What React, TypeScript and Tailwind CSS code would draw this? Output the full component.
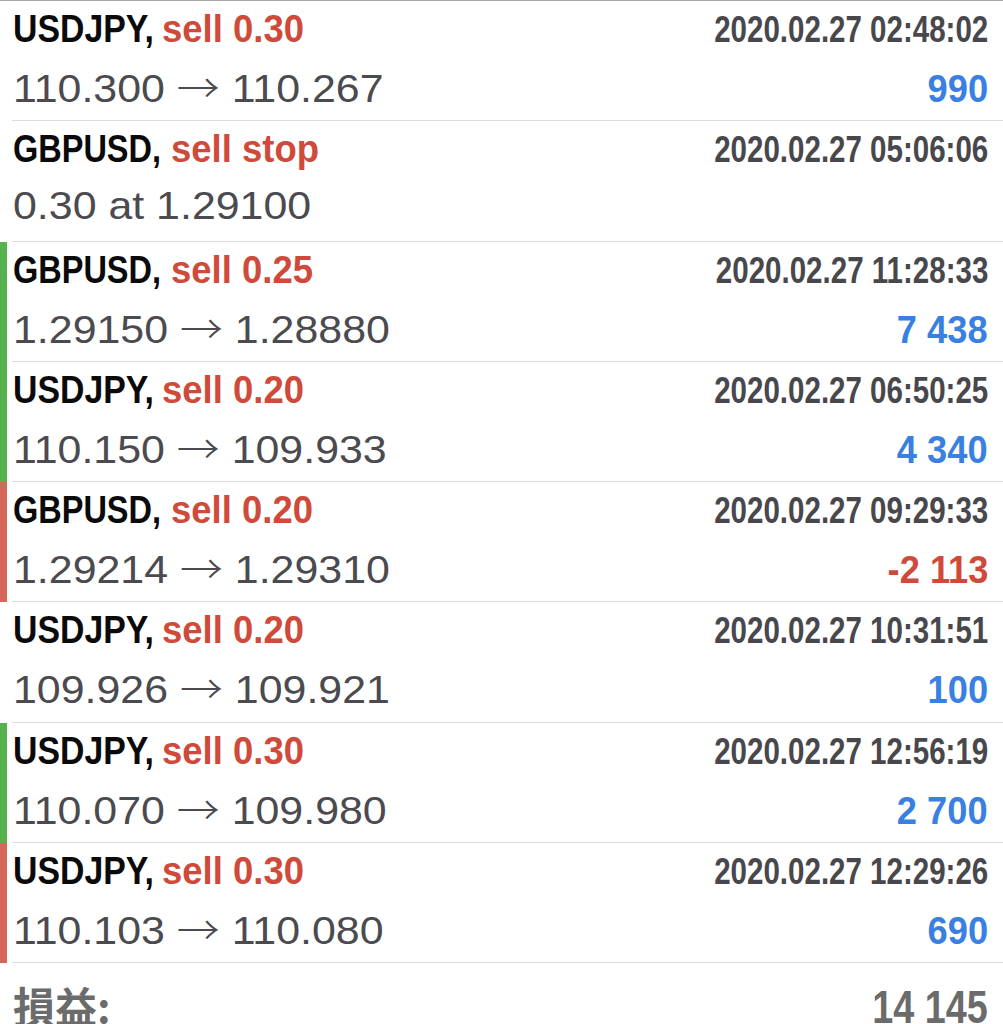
import React from "react";

type Row = {
  sym: "USDJPY," | "GBPUSD,";
  type: string;
  time: string;
  a: string;
  b?: string;
  plain?: string;
  profit?: string;
  neg?: boolean;
  bar?: "green" | "red";
};

const rows: Row[] = [
  { sym: "USDJPY,", type: "sell 0.30", time: "2020.02.27 02:48:02", a: "110.300", b: "110.267", profit: "990" },
  { sym: "GBPUSD,", type: "sell stop", time: "2020.02.27 05:06:06", a: "", plain: "0.30 at 1.29100" },
  { sym: "GBPUSD,", type: "sell 0.25", time: "2020.02.27 11:28:33", a: "1.29150", b: "1.28880", profit: "7 438", bar: "green" },
  { sym: "USDJPY,", type: "sell 0.20", time: "2020.02.27 06:50:25", a: "110.150", b: "109.933", profit: "4 340", bar: "green" },
  { sym: "GBPUSD,", type: "sell 0.20", time: "2020.02.27 09:29:33", a: "1.29214", b: "1.29310", profit: "-2 113", neg: true, bar: "red" },
  { sym: "USDJPY,", type: "sell 0.20", time: "2020.02.27 10:31:51", a: "109.926", b: "109.921", profit: "100" },
  { sym: "USDJPY,", type: "sell 0.30", time: "2020.02.27 12:56:19", a: "110.070", b: "109.980", profit: "2 700", bar: "green" },
  { sym: "USDJPY,", type: "sell 0.30", time: "2020.02.27 12:29:26", a: "110.103", b: "110.080", profit: "690", bar: "red" },
];

const sans = "font-['Liberation_Sans',Arial,sans-serif]";

const symBox: Record<Row["sym"], string> = {
  "USDJPY,": "w-[149px]",
  "GBPUSD,": "w-[158px]",
};
const symScale: Record<Row["sym"], string> = {
  "USDJPY,": "scale-x-[0.89]",
  "GBPUSD,": "scale-x-[0.855]",
};

function TradeRow({ r }: { r: Row }) {
  return (
    <div className="flex h-[120.3px]">
      <div
        className={
          "w-[7px] shrink-0 " +
          (r.bar === "green" ? "bg-[#55b24e]" : r.bar === "red" ? "bg-[#d4665a]" : "bg-white")
        }
      />
      <div className="w-[5px] shrink-0" />
      <div className="flex flex-1 flex-col border-b border-[#dcdcdc] pl-[1px] pr-[15px]">
        <div className="mt-[10px] flex items-baseline justify-between">
          <div className={sans + " flex items-baseline text-[38px] font-bold leading-[36px]"}>
            <span className={"inline-block shrink-0 whitespace-nowrap " + symBox[r.sym]}>
              <span className={"inline-block origin-left whitespace-pre text-[#0a0a0a] " + symScale[r.sym]}>
                {r.sym}
              </span>
            </span>
            <span className="inline-block origin-left scale-x-[0.96] whitespace-pre text-[#cf4a3a]">{r.type}</span>
          </div>
          <div
            className={
              sans +
              " inline-block origin-right scale-x-[0.82] whitespace-pre text-[36px] font-bold leading-[36px] text-[#48484c]"
            }
          >
            {r.time}
          </div>
        </div>
        <div className="mt-[18px] flex items-baseline justify-between">
          <div
            className={
              sans +
              " inline-block origin-left scale-x-[1.1] whitespace-pre text-[39px] leading-[39px] text-[#4a4a4f]"
            }
          >
            {r.plain ? (
              r.plain
            ) : (
              <>
                {r.a + " "}
                <span className="font-['Noto_Sans_CJK_JP',sans-serif] font-light">→</span>
                {" " + r.b}
              </>
            )}
          </div>
          {r.profit && (
            <div
              className={
                sans +
                " inline-block origin-right scale-x-[0.93] whitespace-pre text-[39px] font-bold leading-[39px] " +
                (r.neg ? "text-[#d04a3a]" : "text-[#3a7fe2]")
              }
            >
              {r.profit}
            </div>
          )}
        </div>
      </div>
    </div>
  );
}

export default function App() {
  return (
    <div className="h-[1024px] w-[1003px] overflow-hidden bg-white">
      <div className="h-[1px] bg-[#a8a8a8]" />
      {rows.map((r, i) => (
        <TradeRow key={i} r={r} />
      ))}
      <div className="flex items-baseline justify-between pl-[13px] pr-[15px] pt-[19px]">
        <div className="font-['Noto_Sans_CJK_JP',sans-serif] text-[42px] font-bold leading-[46px] text-[#6b6b6b]">
          損益:
        </div>
        <div
          className={
            sans +
            " inline-block origin-right scale-x-[0.82] whitespace-pre text-[46px] font-bold leading-[46px] text-[#6b6b6b]"
          }
        >
          14 145
        </div>
      </div>
    </div>
  );
}
